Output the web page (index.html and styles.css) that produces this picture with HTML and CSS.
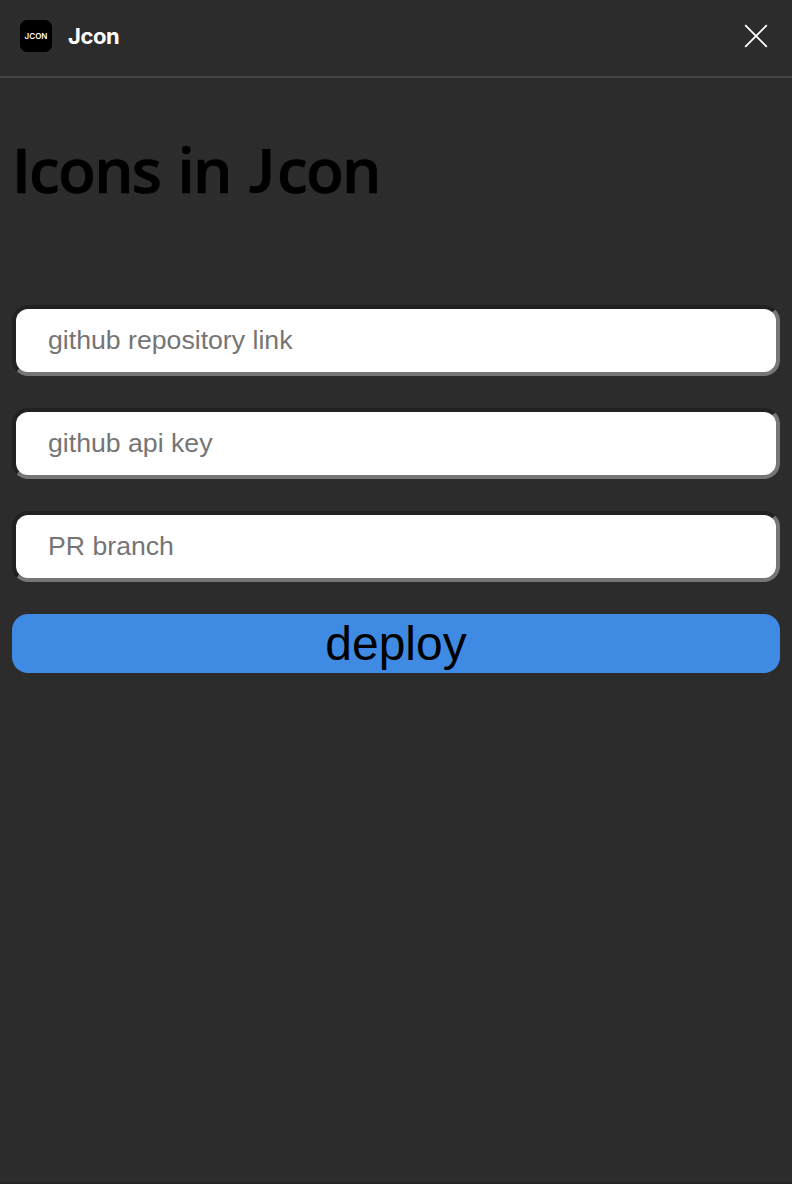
FILE: index.html
```html
<!DOCTYPE html>
<html lang="en">
<head>
<meta charset="utf-8">
<title>Jcon</title>
<link rel="stylesheet" href="styles.css">
</head>
<body>
<div class="window">
  <header class="titlebar">
    <span class="logo">JCON</span>
    <span class="name">Jcon</span>
    <button class="close" aria-label="Close"><svg width="24" height="24" viewBox="0 0 24 24"><path d="M1.2 1.2 22.8 22.8M22.8 1.2 1.2 22.8" fill="none" stroke="#fff" stroke-width="1.9"/></svg></button>
  </header>
  <main class="content">
    <h1 class="heading">Icons in <span class="initial">J</span>con</h1>
    <form class="form">
      <input class="field" type="text" placeholder="github repository link">
      <input class="field" type="text" placeholder="github api key">
      <input class="field" type="text" placeholder="PR branch">
      <button class="deploy" type="button">deploy</button>
    </form>
  </main>
</div>
</body>
</html>
```

FILE: styles.css
```css
* { box-sizing: border-box; }
body { margin: 0; background: #2c2c2c; }
.window { height: 1184px; overflow: hidden; border-bottom: 2px solid #262326; }
.titlebar { display: flex; align-items: center; height: 78px; padding: 0 24px 4px 20px; border-bottom: 2px solid #444; }
.logo { display: flex; align-items: center; justify-content: center; width: 32px; height: 32px; margin-right: 16px; border-radius: 7px; background: #000; color: #fff; font: 600 8px Inter, sans-serif; }
.name { color: #fff; font: 700 22px Inter, sans-serif; letter-spacing: -0.4px; }
.close { display: flex; margin-left: auto; padding: 0; border: 0; background: none; }
.content { padding: 58px 12px 0; }
.heading { margin: 0; height: 169px; color: #000; font: 600 62px/66px "Open Sans", sans-serif; letter-spacing: -1.8px; word-spacing: 3px; white-space: nowrap; -webkit-text-stroke: 0.7px #000; }
.initial { margin: 0 2px 0 1px; font: 700 61px/1 Lato, sans-serif; letter-spacing: 0; -webkit-text-stroke: 0; }
.form { display: flex; flex-direction: column; gap: 32px; }
.field { width: 100%; height: 71px; padding: 0 32px; border: 4px inset #767676; border-radius: 16px; background: #fff; font: 26.667px "Liberation Sans", Arial, sans-serif; }
.field::placeholder { color: #757575; }
.deploy { width: 100%; height: 59px; padding: 0; border: 0; border-radius: 16px; background: #3f8ae2; color: #000; font: 48px/59px "Liberation Sans", Arial, sans-serif; }
```
